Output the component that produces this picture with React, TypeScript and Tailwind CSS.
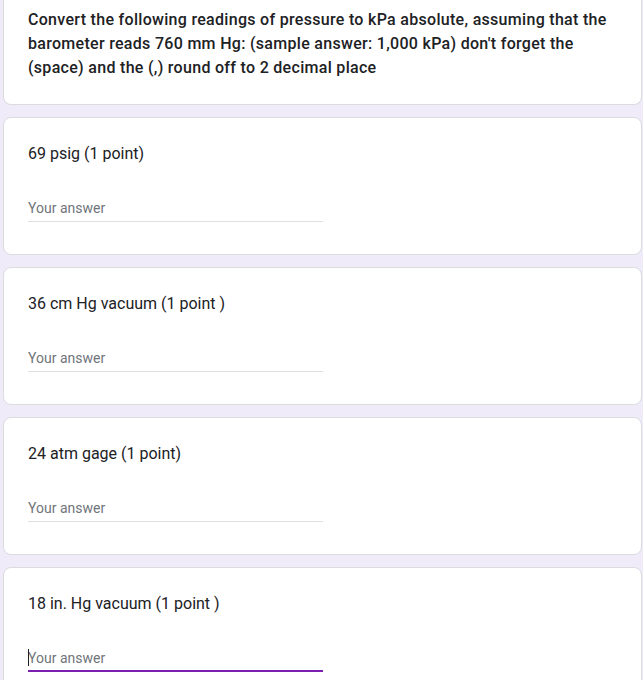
const questions = [
  { title: '69 psig (1 point)', focused: false },
  { title: '36 cm Hg vacuum (1 point )', focused: false },
  { title: '24 atm gage (1 point)', focused: false },
  { title: '18 in. Hg vacuum (1 point )', focused: true },
]

function QuestionCard({ title, focused }: { title: string; focused: boolean }) {
  return (
    <div className="bg-white border border-[#dadce0] rounded-lg pt-6 px-6 pb-8">
      <div className="text-[16px] leading-6 text-[#202124]">{title}</div>
      {/* answer field */}
      <div
        className={
          focused
            ? 'mt-8 w-[295px] pb-[2px] border-b-2 border-[#7b1fb0] text-[14px] leading-5 text-[#70757a] relative'
            : 'mt-8 w-[295px] pb-[3px] border-b border-[#e0e0e0] text-[14px] leading-5 text-[#70757a] relative'
        }
      >
        {focused && <span className="absolute left-0 top-[1px] w-px h-[17px] bg-[#202124]" />}
        Your answer
      </div>
    </div>
  )
}

export default function App() {
  return (
    <div
      className="min-h-[680px] bg-[#f0ebf8] pl-[3px] pr-px overflow-hidden"
      style={{ fontFamily: 'Roboto, "Noto Sans", Arial, sans-serif' }}
    >
      <div className="flex flex-col gap-3">
        {/* description card, top scrolled off */}
        <div className="bg-white border border-t-0 border-[#dadce0] rounded-b-lg pt-[8px] px-6 pb-6">
          <p className="text-[16px] leading-6 font-medium text-[#202124] tracking-[0.3px]">
            Convert the following readings of pressure to kPa absolute, assuming that the barometer
            reads 760 mm Hg: (sample answer: 1,000 kPa) don't forget the (space) and the (,) round off
            to 2 decimal place
          </p>
        </div>
        {questions.map((q) => (
          <QuestionCard key={q.title} title={q.title} focused={q.focused} />
        ))}
      </div>
    </div>
  )
}
